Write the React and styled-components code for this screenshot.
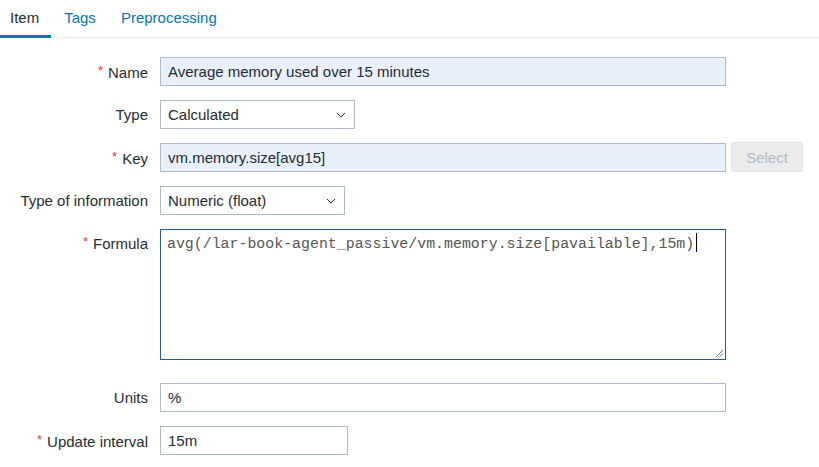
import React from 'react'
import styled, { createGlobalStyle } from 'styled-components'

const GlobalStyle = createGlobalStyle`
    body {
        margin: 0;
        background: #ffffff;
        font-family: "Liberation Sans", Arial, sans-serif;
        font-size: 15px;
        color: #1f2c33;
    }
`

const Page = styled.div`
    width: 819px;
    height: 467px;
    overflow: hidden;
`

const TabBar = styled.div`
    display: flex;
    height: 37px;
    border-bottom: 1px solid #ebebeb;
`

const Tab = styled.div`
    display: flex;
    align-items: center;
    padding: 0 12px 1px 10px;
    margin-right: 3px;
    font-size: 15px;
    color: ${p => (p.active ? '#1f2c33' : '#0275b8')};
    border-bottom: 3px solid ${p => (p.active ? '#0275b8' : 'transparent')};
    margin-bottom: -1px;
`

const Form = styled.div`
    display: grid;
    grid-template-columns: 148px auto;
    column-gap: 12px;
    row-gap: 14px;
    padding-top: 19px;
    align-items: center;
`

const Label = styled.div`
    text-align: right;
    font-size: 15px;
    color: #1f2c33;
    align-self: ${p => (p.top ? 'start' : 'center')};
    padding-top: ${p => (p.top ? '5px' : '0')};
`

const Star = styled.span`
    color: #e33734;
    font-size: 13px;
    vertical-align: 3px;
    margin-right: 5px;
`

const Field = styled.div`
    display: flex;
    align-items: center;
    gap: 5px;
`

const Input = styled.div`
    box-sizing: border-box;
    width: ${p => p.width}px;
    height: 29px;
    display: flex;
    align-items: center;
    padding: 0 7px;
    font-size: 15px;
    color: #1f2c33;
    background: ${p => (p.filled ? '#e8f0fe' : '#ffffff')};
    border: 1px solid #acbbc7;
`

const Select = styled(Input)`
    justify-content: space-between;
    padding-right: 8px;
`

const Chevron = () => (
    <svg width="10" height="6" viewBox="0 0 10 6">
        <path d="M1 1 L5 5 L9 1" fill="none" stroke="#1f2c33" strokeWidth="1" />
    </svg>
)

const Button = styled.div`
    box-sizing: border-box;
    width: 72px;
    height: 30px;
    margin-top: -1px;
    display: flex;
    align-items: center;
    justify-content: center;
    font-size: 15px;
    color: #acbbc7;
    background: #ebebeb;
    border: 1px solid #dfe4e7;
    border-radius: 2px;
`

const TextArea = styled.div`
    position: relative;
    box-sizing: border-box;
    width: 566px;
    height: 131px;
    margin-bottom: 9px;
    padding: 3px 6px;
    border: 1px solid #1f5f94;
    font-family: "Liberation Mono", "Courier New", monospace;
    font-size: 14.9px;
    line-height: 21px;
    color: #555555;
`

const Caret = styled.span`
    display: inline-block;
    width: 1px;
    height: 19px;
    margin-left: 2px;
    vertical-align: -4px;
    background: #000000;
`

const Grip = styled.svg`
    position: absolute;
    right: 1px;
    bottom: 1px;
`

const Row = ({ label, required, top, children }) => (
    <>
        <Label top={top}>
            {required && <Star>*</Star>}
            {label}
        </Label>
        <Field>{children}</Field>
    </>
)

const App = () => {
    return (
        <Page>
            <GlobalStyle />
            <TabBar>
                <Tab active>Item</Tab>
                <Tab>Tags</Tab>
                <Tab>Preprocessing</Tab>
            </TabBar>
            <Form>
                <Row label="Name" required>
                    <Input width={566} filled>Average memory used over 15 minutes</Input>
                </Row>
                <Row label="Type">
                    <Select width={195}>Calculated<Chevron /></Select>
                </Row>
                <Row label="Key" required>
                    <Input width={566} filled>vm.memory.size[avg15]</Input>
                    <Button>Select</Button>
                </Row>
                <Row label="Type of information">
                    <Select width={185}>Numeric (float)<Chevron /></Select>
                </Row>
                <Row label="Formula" required top>
                    <TextArea>
                        avg(/lar-book-agent_passive/vm.memory.size[pavailable],15m)<Caret />
                        <Grip width="9" height="9" viewBox="0 0 9 9">
                            <path d="M1 8 L8 1 M4.5 8 L8 4.5" stroke="#666" strokeWidth="1" />
                        </Grip>
                    </TextArea>
                </Row>
                <Row label="Units">
                    <Input width={566}>%</Input>
                </Row>
                <Row label="Update interval" required>
                    <Input width={188}>15m</Input>
                </Row>
            </Form>
        </Page>
    )
}

export default App
